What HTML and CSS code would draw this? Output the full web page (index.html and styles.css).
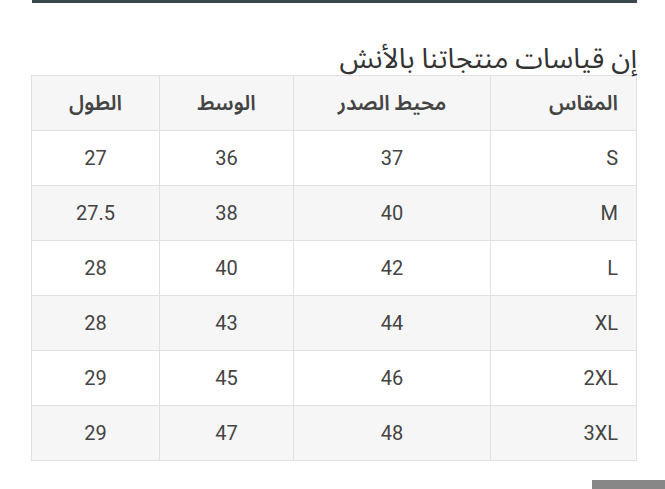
FILE: index.html
```
<!DOCTYPE html>
<html lang="ar" dir="rtl">
<head>
<meta charset="utf-8">
<link rel="stylesheet" href="styles.css">
</head>
<body>
<div class="page">
  <div class="topbar"></div>
  <h2 class="title">إن قياسات منتجاتنا بالأنش</h2>
  <table class="sizes">
    <colgroup>
      <col class="c1"><col class="c2"><col class="c3"><col class="c4">
    </colgroup>
    <thead>
      <tr><th class="first">المقاس</th><th>محيط الصدر</th><th>الوسط</th><th>الطول</th></tr>
    </thead>
    <tbody>
      <tr><td class="first">S</td><td>37</td><td>36</td><td>27</td></tr>
      <tr><td class="first">M</td><td>40</td><td>38</td><td>27.5</td></tr>
      <tr><td class="first">L</td><td>42</td><td>40</td><td>28</td></tr>
      <tr><td class="first">XL</td><td>44</td><td>43</td><td>28</td></tr>
      <tr><td class="first">2XL</td><td>46</td><td>45</td><td>29</td></tr>
      <tr><td class="first">3XL</td><td>48</td><td>47</td><td>29</td></tr>
    </tbody>
  </table>
</div>
<div class="footer">
  <div class="btn"></div>
</div>
</body>
</html>
```
FILE: styles.css
```
html, body {
  margin: 0;
  padding: 0;
  background: #ffffff;
  overflow: hidden;
}
body {
  width: 665px;
  height: 489px;
  font-family: Roboto, "Noto Sans Arabic", "DejaVu Sans", sans-serif;
  color: #444;
}
.page {
  width: 605px;
  margin-right: 28px;
  margin-left: 32px;
}
.topbar {
  height: 3px;
  background: #3a484c;
}
.title {
  margin: 0;
  padding-top: 40px;
  height: 32px;
  font-size: 28px;
  line-height: 32px;
  font-weight: normal;
  color: #333;
  text-align: right;
  white-space: nowrap;
}
.sizes {
  width: 605px;
  border-collapse: collapse;
  table-layout: fixed;
  border: 1px solid #e0e0e0;
}
.c1 { width: 146px; }
.c2 { width: 197px; }
.c3 { width: 134px; }
.c4 { width: 128px; }
.sizes th, .sizes td {
  height: 55px;
  padding: 0 10px;
  border: 1px solid #e0e0e0;
  text-align: center;
  font-size: 20px;
  color: #444;
  box-sizing: border-box;
}
.sizes th {
  background: #f6f6f6;
  font-weight: 600;
  font-size: 21px;
}
.sizes th.first, .sizes td.first {
  text-align: right;
  padding-right: 18px;
}
.sizes tbody tr:nth-child(even) td {
  background: #f6f6f6;
}
.footer {
  display: flex;
  justify-content: flex-start;
  margin-top: 19px;
}
.btn {
  width: 73px;
  height: 20px;
  background: #878787;
}
```
